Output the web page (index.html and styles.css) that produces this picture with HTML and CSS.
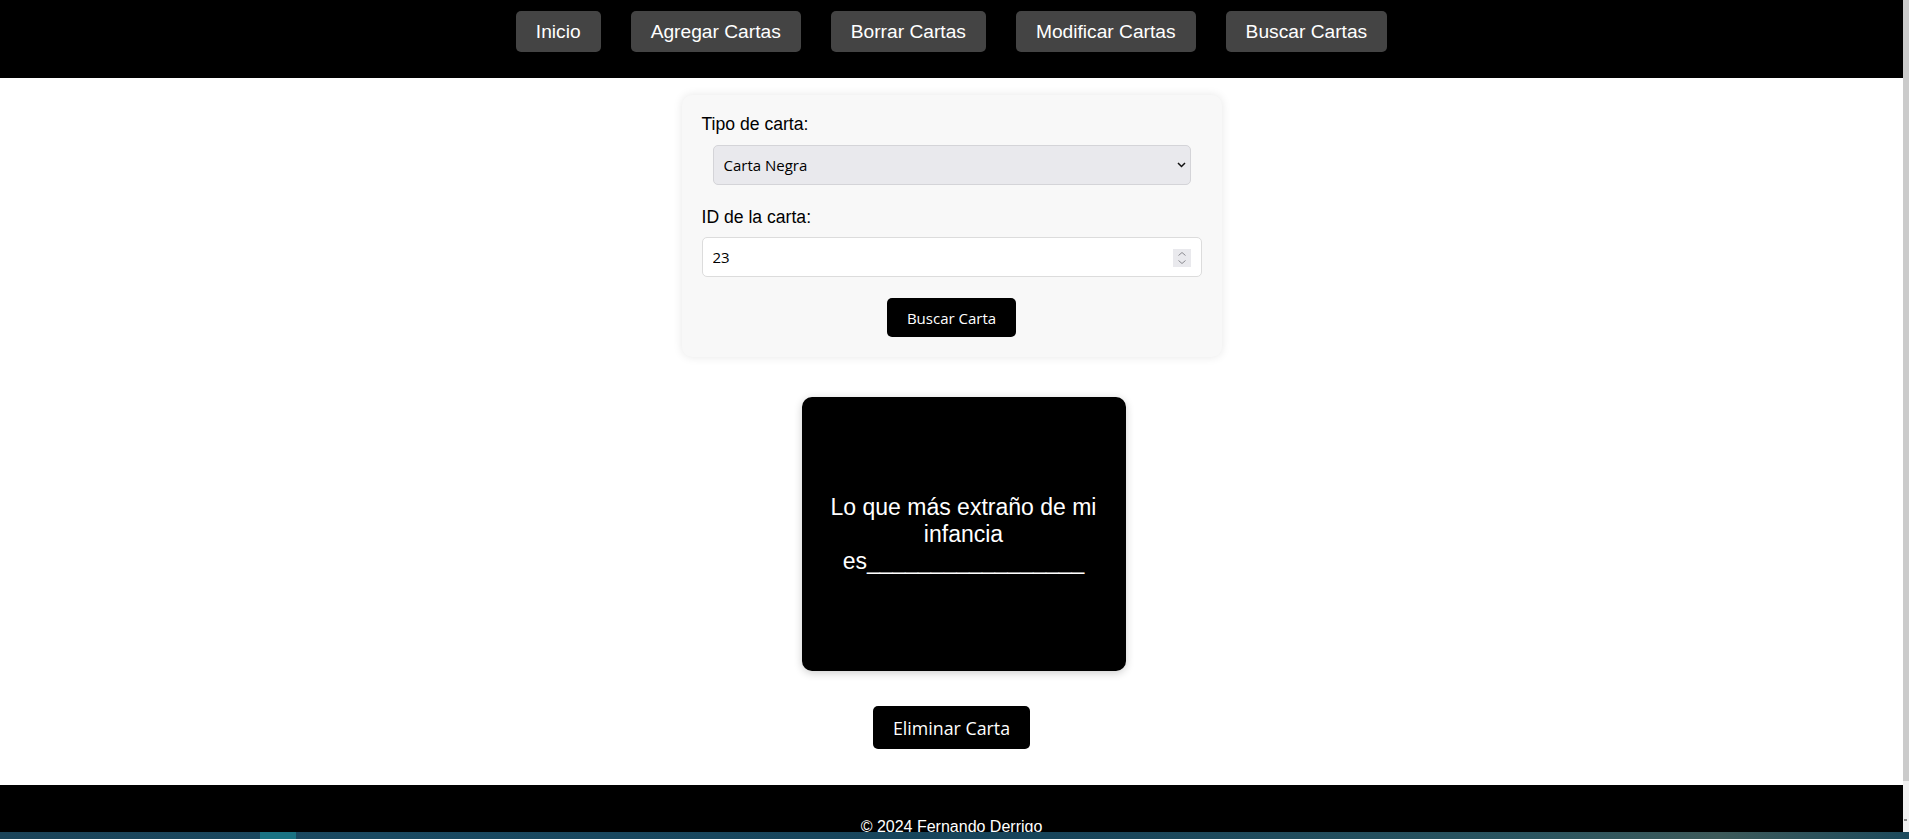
FILE: index.html
```html
<!DOCTYPE html>
<html lang="es">
<head>
<meta charset="utf-8">
<title>Buscar Cartas</title>
<link rel="stylesheet" href="styles.css">
</head>
<body>
<header class="topbar">
  <nav class="nav">
    <a class="nav-btn" href="#">Inicio</a>
    <a class="nav-btn" href="#">Agregar Cartas</a>
    <a class="nav-btn" href="#">Borrar Cartas</a>
    <a class="nav-btn" href="#">Modificar Cartas</a>
    <a class="nav-btn" href="#">Buscar Cartas</a>
  </nav>
</header>
<main class="main">
  <form class="search-form">
    <label class="field-label" for="tipo">Tipo de carta:</label>
    <div class="select-wrap">
      <select class="field-select" id="tipo">
        <option>Carta Negra</option>
        <option>Carta Blanca</option>
      </select>
      <svg class="select-chevron" width="9" height="6" viewBox="0 0 9 6">
        <path d="M1 1 L4.5 4.5 L8 1" fill="none" stroke="#111" stroke-width="1.5"/>
      </svg>
    </div>
    <label class="field-label field-label-second" for="cid">ID de la carta:</label>
    <div class="number-wrap">
      <input class="field-input" id="cid" type="number" value="23">
      <span class="spinner">
        <svg width="18" height="18" viewBox="0 0 18 18">
          <rect width="18" height="18" fill="#e9e9ed"/>
          <path d="M5.5 6.5 L9 3.5 L12.5 6.5" fill="none" stroke="#8a8a90" stroke-width="1"/>
          <path d="M5.5 11.5 L9 14.5 L12.5 11.5" fill="none" stroke="#8a8a90" stroke-width="1"/>
        </svg>
      </span>
    </div>
    <div class="form-actions">
      <button class="btn-dark btn-search" type="button">Buscar Carta</button>
    </div>
  </form>
  <div class="black-card">
    <p class="card-text">Lo que más extraño de mi infancia es_________________</p>
  </div>
  <button class="btn-dark btn-delete" type="button">Eliminar Carta</button>
</main>
<footer class="footer">
  <p class="footer-text">© 2024 Fernando Derrigo</p>
</footer>
<div class="scrollbar"><span class="scrollbar-thumb"></span><span class="scrollbar-arrow"></span></div>
<div class="taskbar"><span class="taskbar-app"></span></div>
</body>
</html>
```
FILE: styles.css
```css
html {
  overflow: hidden;
}

body {
  margin: 0 6px 0 0;
  background: #fff;
  font-family: "Liberation Sans", Arial, sans-serif;
  color: #000;
}

.topbar {
  background: #000;
  height: 78px;
  box-sizing: border-box;
  padding-top: 11px;
}
.nav {
  display: flex;
  justify-content: center;
  gap: 30px;
}
.nav-btn {
  display: block;
  background: #444;
  color: #fff;
  font-size: 19.2px;
  height: 41px;
  line-height: 41px;
  padding: 0 20px;
  border-radius: 5px;
  text-decoration: none;
}

.main {
  display: flex;
  flex-direction: column;
  align-items: center;
  padding-top: 17px;
  padding-bottom: 36px;
}

.search-form {
  width: 540px;
  box-sizing: border-box;
  padding: 20px;
  background: #f8f8f8;
  border-radius: 10px;
  box-shadow: 0 0 10px rgba(0, 0, 0, 0.1);
  display: flex;
  flex-direction: column;
}
.field-label {
  font-size: 17.6px;
  line-height: 18px;
}
.field-label-second {
  margin-top: 23px;
}
.select-wrap {
  position: relative;
  margin: 12px 11px 0;
}
.field-select {
  display: block;
  width: 100%;
  height: 40px;
  box-sizing: border-box;
  padding: 0 10px;
  border: 1px solid #d4d4d8;
  border-radius: 5px;
  background-color: #e9e9ed;
  font-family: "Open Sans", "Noto Sans", sans-serif;
  font-size: 15px;
  color: #000;
  -webkit-appearance: none;
  appearance: none;
}
.select-chevron {
  position: absolute;
  right: 5px;
  top: 17px;
  pointer-events: none;
}
.number-wrap {
  position: relative;
  margin-top: 11px;
}
.field-input {
  display: block;
  width: 100%;
  height: 40px;
  box-sizing: border-box;
  padding: 0 10px;
  border: 1px solid #dcdcdc;
  border-radius: 5px;
  background: #fff;
  font-family: "Open Sans", "Noto Sans", sans-serif;
  font-size: 15px;
  color: #000;
  -moz-appearance: textfield;
}
.field-input::-webkit-inner-spin-button,
.field-input::-webkit-outer-spin-button {
  -webkit-appearance: none;
  margin: 0;
}
.spinner {
  position: absolute;
  right: 11px;
  top: 12px;
  width: 18px;
  height: 18px;
  display: block;
}
.spinner svg {
  display: block;
}
.form-actions {
  display: flex;
  justify-content: center;
  margin-top: 21px;
}

.btn-dark {
  background: #000;
  color: #fff;
  border: none;
  border-radius: 5px;
  font-family: "Open Sans", "Noto Sans", sans-serif;
  cursor: pointer;
}
.btn-search {
  height: 39px;
  padding: 0 20px;
  font-size: 15px;
}

.black-card {
  margin-top: 40px;
  margin-left: 24px;
  width: 324px;
  height: 274px;
  box-sizing: border-box;
  padding: 0 20px;
  background: #000;
  border-radius: 10px;
  box-shadow: 0 2px 8px rgba(0, 0, 0, 0.2);
  display: flex;
  align-items: center;
  justify-content: center;
}
.card-text {
  margin: 0;
  color: #fff;
  font-size: 23px;
  line-height: normal;
  text-align: center;
}

.btn-delete {
  margin-top: 35px;
  height: 43px;
  padding: 0 20px;
  font-size: 17.8px;
}

.footer {
  background: #000;
  color: #fff;
  text-align: center;
  padding: 17px;
}
.footer-text {
  margin: 16px 0;
  font-size: 16px;
}

.scrollbar {
  position: fixed;
  top: 0;
  right: 0;
  bottom: 0;
  width: 6px;
  background: #f0f0f0;
}
.scrollbar-thumb {
  display: block;
  height: 781px;
  background: #cbcbcb;
}
.scrollbar-arrow {
  position: absolute;
  left: 1px;
  top: 819px;
  width: 3px;
  height: 2px;
  background: #8a8a8a;
}

.taskbar {
  position: fixed;
  left: 0;
  right: 0;
  bottom: 0;
  height: 7px;
  background: linear-gradient(90deg, #1b4459 0%, #1a4a62 20%, #17445a 55%, #2a5560 80%, #3d5a5a 90%, #1c4a5c 100%);
}
.taskbar-app {
  position: absolute;
  left: 260px;
  top: 0;
  width: 36px;
  height: 7px;
  background: #1a7383;
}
```
